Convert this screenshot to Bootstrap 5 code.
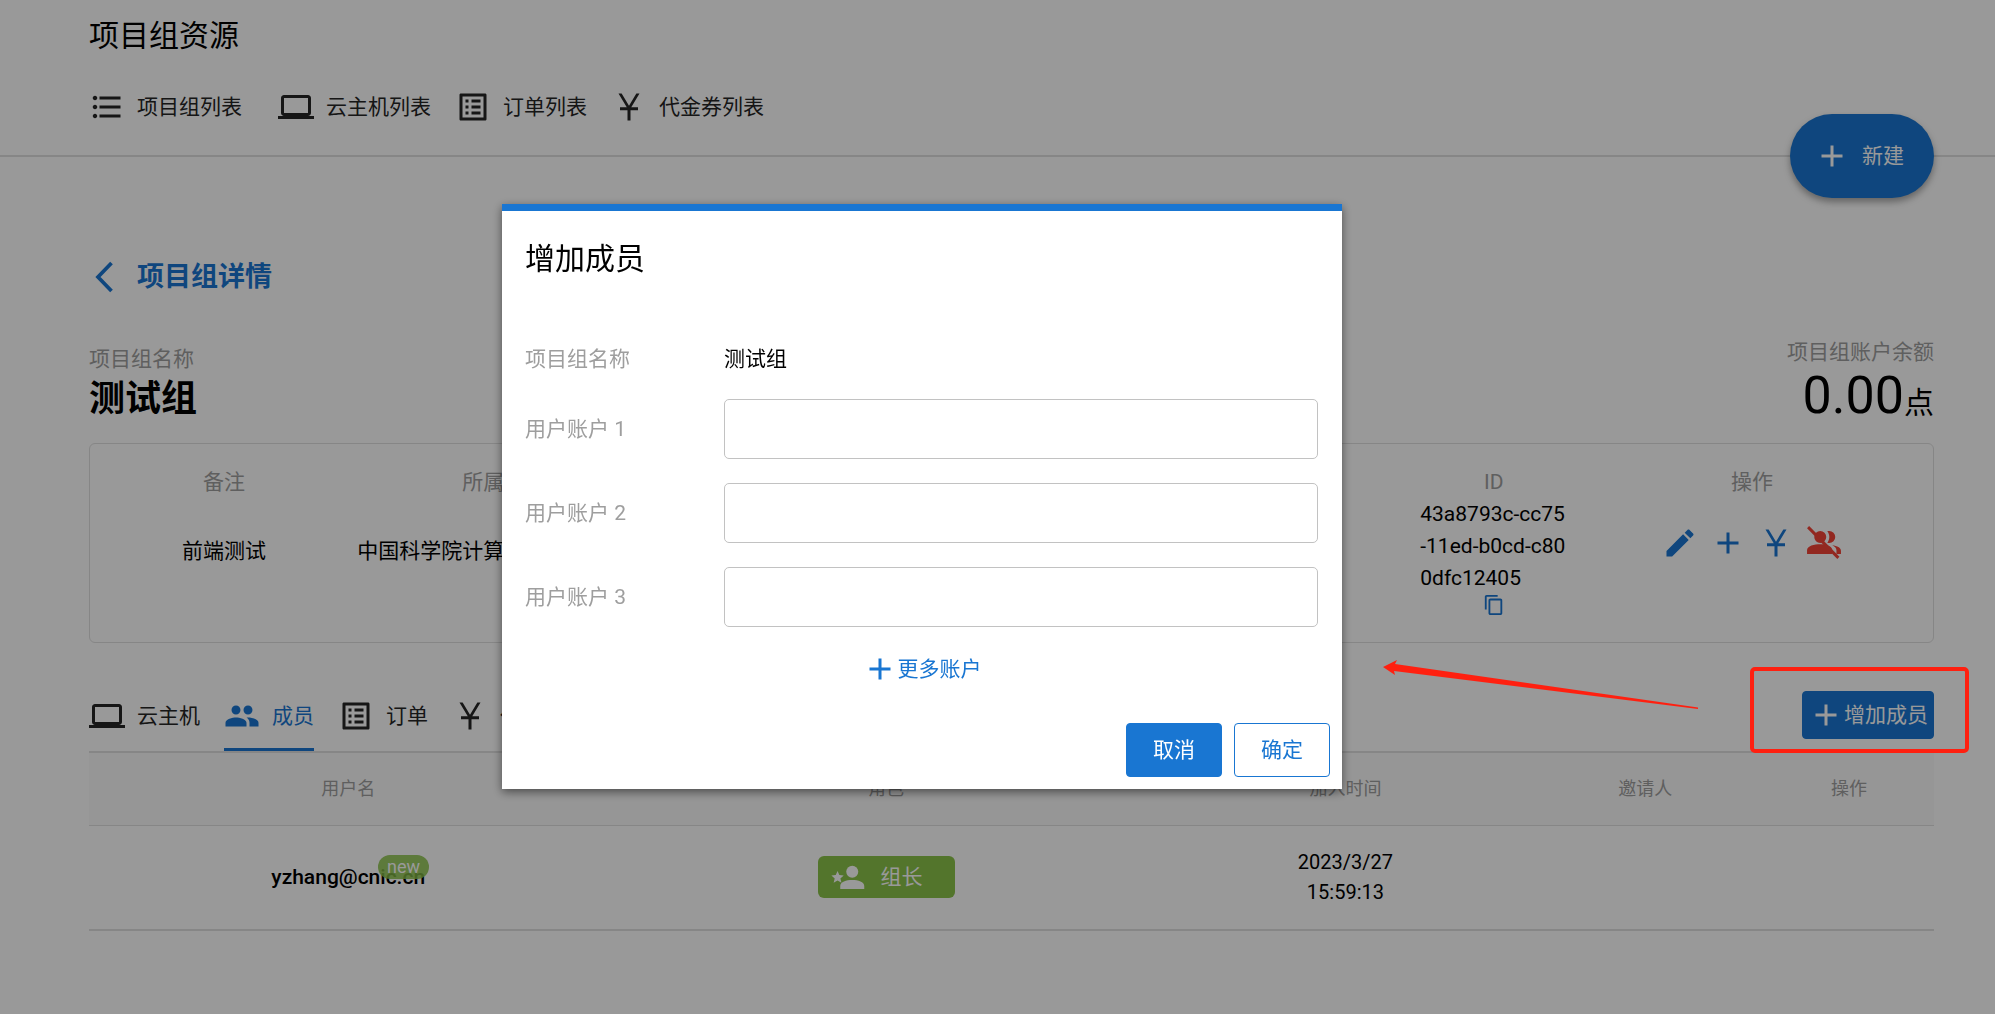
<!DOCTYPE html>
<html lang="zh-CN">
<head>
<meta charset="utf-8">
<meta name="viewport" content="width=device-width, initial-scale=1">
<title>项目组资源</title>
<link href="https://cdn.jsdelivr.net/npm/bootstrap@5.3.0/dist/css/bootstrap.min.css" rel="stylesheet">
<style>
  :root { --blue: #1976d2; --line: #e0e0e0; --hint: #9e9e9e; }
  body { font-family: Roboto, "Noto Sans CJK SC", sans-serif; font-size: 21px; line-height: 32px; color: #000; background: #fff; }
  a { text-decoration: none; }
  .ico { width: 36px; height: 36px; flex: none; fill: currentColor; display: block; }
  .gutters { padding-left: 89px; padding-right: 61px; }
  .hint { color: var(--hint); }
  .blue-text { color: var(--blue); }
  .btn { --bs-btn-font-size: 21px; --bs-btn-line-height: 32px; --bs-btn-border-radius: 4px; }
  .btn-blue { --bs-btn-color: #fff; --bs-btn-bg: var(--blue); --bs-btn-border-color: var(--blue); --bs-btn-hover-color: #fff; --bs-btn-hover-bg: #1565c0; }
  .btn-line { --bs-btn-color: var(--blue); --bs-btn-border-color: var(--blue); --bs-btn-bg: #fff; --bs-btn-hover-color: var(--blue); --bs-btn-hover-bg: #e3f2fd; }

  .top-bar { border-bottom: 2px solid var(--line); height: 157px; padding-top: 18px; }
  .page-title { font-size: 30px; line-height: 36px; font-weight: 400; margin: 0 0 35px; }
  .item-link { color: #262626; gap: 12px; }
  .fab { position: absolute; right: 61px; top: 114px; height: 84px; padding: 0 30px 0 24px; gap: 12px; --bs-btn-border-radius: 42px; box-shadow: 0 4px 7px rgba(0,0,0,.35); border: 0; }

  .detail-head { padding-top: 102px; }
  .back-link { font-size: 27px; line-height: 36px; font-weight: 700; gap: 12px; }
  .group-name { font-size: 36px; line-height: 48px; font-weight: 700; margin: 0 0 8px; }
  .balance { font-size: 52px; line-height: 56px; }
  .balance-unit { font-size: 30px; }

  .info-box { display: grid; grid-template-columns: 258fr 260fr 753fr 254fr 262fr; height: 200px; border: 1px solid var(--line); border-radius: 6px; padding: 22px 50px 0 5px; margin-top: 12px; text-align: center; }
  .info-value { height: 106px; display: flex; align-items: center; justify-content: center; flex-direction: column; }
  .id-text { width: 147px; text-align: left; word-break: break-all; line-height: 32px; }
  .icon-btn { border: 0; padding: 0; background: none; color: var(--blue); }
  .ico-small { width: 22px; height: 22px; }

  .tab-bar { border-bottom: 2px solid var(--line); height: 74px; margin-top: 36px; }
  .tab-bar .nav-link { padding: 4px 0 0; gap: 12px; color: #262626; border-bottom: 3px solid transparent; }
  .tab-bar .nav-link.active { color: var(--blue); border-bottom-color: var(--blue); }
  .btn-add { height: 48px; padding: 0 5px; }

  .member-table { table-layout: fixed; text-align: center; margin: 0; --bs-table-bg: transparent; --bs-table-color: #000; border-color: var(--line); }
  .member-table > thead th { height: 72px; font-size: 18px; font-weight: 400; background: #fafafa; color: var(--hint); vertical-align: middle; border-bottom: 1px solid var(--line); }
  .member-table > tbody td { height: 105px; vertical-align: middle; font-size: 20px; line-height: 30px; padding: 0; border-bottom: 2px solid var(--line); }
  .mail { font-size: 21px; font-weight: 500; }
  .new-pill { position: absolute; right: -4px; top: -10px; background: #8bc34a; color: #fff; opacity: .86; border-radius: 12px; font-size: 18px; font-weight: 400; line-height: 24px; padding: 0 9px; }
  .role-chip { background: #8bc34a; color: #fff; border-radius: 6px; font-size: 21px; width: 137px; height: 42px; padding-left: 11px; gap: 16px; }

  .modal-backdrop { --bs-backdrop-opacity: .4; }
  .member-modal { padding-right: 151px; }
  .member-modal .modal-dialog { max-width: 840px; margin-top: 204px; }
  .member-modal .modal-content { border: 0; border-top: 7px solid var(--blue); border-radius: 0; box-shadow: 0 3px 9px rgba(0,0,0,.5); color: #000; }
  .member-modal .modal-header { border: 0; padding: 29px 23px 0; }
  .member-modal .modal-title { font-size: 30px; line-height: 38px; font-weight: 400; }
  .member-modal .modal-body { padding: 65px 24px 0 23px; }
  .member-modal .modal-footer { border: 0; padding: 36px 12px 12px; gap: 12px; }
  .form-line { display: grid; grid-template-columns: 199px 1fr; align-items: center; margin-bottom: 24px; }
  .form-line label, .form-line .hint { line-height: 32px; }
  .form-line .form-control { height: 60px; border: 1px solid #c2c2c2; border-radius: 5px; font-size: 21px; }
  .btn-wide { width: 96px; height: 54px; margin: 0; }

  .note-layer { position: absolute; z-index: 1070; pointer-events: none; }
  .note-frame { right: 26px; top: 667px; width: 219px; height: 86px; border: 4px solid #ff2010; border-radius: 5px; }
  .note-arrow { right: 295px; top: 659px; width: 317px; height: 52px; fill: #ff2010; }
</style>
<script src="https://cdn.jsdelivr.net/npm/bootstrap@5.3.0/dist/js/bootstrap.bundle.min.js" defer></script>
</head>
<body class="position-relative min-vh-100">

<svg class="d-none" aria-hidden="true">
  <symbol id="i-list" viewBox="0 0 24 24"><path d="M4 10.5c-.83 0-1.5.67-1.5 1.5s.67 1.5 1.5 1.5 1.5-.67 1.5-1.5-.67-1.5-1.5-1.5zm0-6c-.83 0-1.5.67-1.5 1.5S3.17 7.5 4 7.5 5.5 6.83 5.5 6 4.83 4.5 4 4.5zm0 12c-.83 0-1.5.68-1.5 1.5s.68 1.5 1.5 1.5 1.5-.68 1.5-1.5-.67-1.5-1.5-1.5zM7 19h14v-2H7v2zm0-6h14v-2H7v2zm0-8v2h14V5H7z"/></symbol>
  <symbol id="i-laptop" viewBox="0 0 24 24"><path d="M20 18c1.1 0 1.99-.9 1.99-2L22 6c0-1.1-.9-2-2-2H4c-1.1 0-2 .9-2 2v10c0 1.1.9 2 2 2H0v2h24v-2h-4zM4 6h16v10H4V6z"/></symbol>
  <symbol id="i-order" viewBox="0 0 24 24"><path d="M19 5v14H5V5h14m1.1-2H3.9c-.5 0-.9.4-.9.9v16.2c0 .4.4.9.9.9h16.2c.4 0 .9-.5.9-.9V3.9c0-.5-.5-.9-.9-.9zM11 7h6v2h-6V7zm0 4h6v2h-6v-2zm0 4h6v2h-6zM7 7h2v2H7zm0 4h2v2H7zm0 4h2v2H7z"/></symbol>
  <symbol id="i-yen" viewBox="0 0 24 24"><path d="M5 3h2.1l4.9 8.1L16.900 3H19l-5.500 9.200H18v2h-5V21h-2v-6.800H6v-2h4.500z"/></symbol>
  <symbol id="i-group" viewBox="0 0 24 24"><path d="M16 11c1.660 0 2.990-1.340 2.990-3S17.660 5 16 5c-1.660 0-3 1.340-3 3s1.340 3 3 3zm-8 0c1.660 0 2.990-1.340 2.990-3S9.660 5 8 5C6.340 5 5 6.340 5 8s1.340 3 3 3zm0 2c-2.330 0-7 1.170-7 3.500V19h14v-2.500c0-2.330-4.670-3.500-7-3.500zm8 0c-.29 0-.62.02-.97.05 1.160.84 1.970 1.970 1.970 3.450V19h6v-2.500c0-2.330-4.670-3.500-7-3.500z"/></symbol>
  <symbol id="i-add" viewBox="0 0 24 24"><path d="M19 13h-6v6h-2v-6H5v-2h6V5h2v6h6v2z"/></symbol>
  <symbol id="i-back" viewBox="0 0 24 24"><path d="M15 2.700L6 12l9 9.300" fill="none" stroke="currentColor" stroke-width="2.500"/></symbol>
  <symbol id="i-edit" viewBox="0 0 24 24"><path d="M3 17.250V21h3.750L17.810 9.940l-3.750-3.750L3 17.250zM20.710 7.040c.39-.39.39-1.020 0-1.410l-2.340-2.340c-.39-.39-1.020-.39-1.410 0l-1.830 1.830 3.750 3.750 1.830-1.830z"/></symbol>
  <symbol id="i-copy" viewBox="0 0 24 24"><path d="M16 1H4c-1.100 0-2 .9-2 2v14h2V3h12V1zm3 4H8c-1.100 0-2 .9-2 2v14c0 1.100.9 2 2 2h11c1.100 0 2-.9 2-2V7c0-1.100-.9-2-2-2zm0 16H8V7h11v14z"/></symbol>
  <mask id="m-slash" maskUnits="userSpaceOnUse" x="0" y="0" width="24" height="24"><path fill="#fff" d="M0 0h24v24H0z"/><path d="M2.500 0.500L24 22" stroke="#000" stroke-width="2"/></mask>
  <symbol id="i-group-off" viewBox="0 0 24 24"><g mask="url(#m-slash)"><path d="M9.500 4a4 4 0 1 1 0 8a4 4 0 0 1 0-8zM15.500 4a4 4 0 1 1 0 8c-.5 0-.9-.1-1.300-.2 1.800-2.100 1.800-5.500 0-7.600.4-.1.800-.2 1.300-.2zM.7 19.300v-2.500C.7 14 5.500 12.900 9.500 12.900s8 1.200 8 3.900v2.500zM17.500 13.500c3.300.5 5.800 1.600 5.800 3.600v2.200h-3v-2.500c0-1.500-1.200-2.500-2.800-3.300z"/></g><path d="M.7 2.100L2.100.7 22.300 21.200 20.900 22.600z"/></symbol>
  <symbol id="i-leader" viewBox="0 0 24 24"><circle cx="15.500" cy="8.500" r="4"/><path d="M7.500 20v-2c0-2.700 4-4 8-4s8 1.300 8 4v2zM5.700 8l1.200 2.700 2.900.3-2.200 2 .7 2.900-2.600-1.600-2.600 1.600.7-2.900-2.200-2 2.900-.3z"/></symbol>
</svg>

<header class="top-bar gutters">
  <h1 class="page-title">项目组资源</h1>
  <nav class="d-flex align-items-center gap-4" aria-label="项目组资源">
    <a href="#" class="item-link d-flex align-items-center me-2 pe-1"><svg class="ico"><use href="#i-list"/></svg>项目组列表</a>
    <a href="#" class="item-link d-flex align-items-center"><svg class="ico"><use href="#i-laptop"/></svg>云主机列表</a>
    <a href="#" class="item-link d-flex align-items-center"><svg class="ico"><use href="#i-order"/></svg>订单列表</a>
    <a href="#" class="item-link d-flex align-items-center"><svg class="ico"><use href="#i-yen"/></svg>代金券列表</a>
  </nav>
  <button type="button" class="btn btn-blue fab d-flex align-items-center"><svg class="ico"><use href="#i-add"/></svg>新建</button>
</header>

<main class="gutters">
  <div class="detail-head d-flex justify-content-between">
    <div>
      <a href="#" class="back-link blue-text d-flex align-items-center"><svg class="ico"><use href="#i-back"/></svg>项目组详情</a>
      <div class="hint mt-5">项目组名称</div>
      <h2 class="group-name">测试组</h2>
    </div>
    <div class="text-end align-self-end">
      <div class="hint">项目组账户余额</div>
      <div class="balance">0.00<span class="balance-unit">点</span></div>
    </div>
  </div>

  <section class="info-box">
    <div><div class="hint">备注</div><div class="info-value">前端测试</div></div>
    <div><div class="hint">所属</div><div class="info-value text-nowrap">中国科学院计算技术研究所</div></div>
    <div></div>
    <div>
      <div class="hint">ID</div>
      <div class="info-value justify-content-start"><div class="id-text">43a8793c-cc75-11ed-b0cd-c800dfc12405</div>
        <button type="button" class="icon-btn" aria-label="复制"><svg class="ico ico-small"><use href="#i-copy"/></svg></button></div>
    </div>
    <div>
      <div class="hint">操作</div>
      <div class="info-value flex-row gap-2 pb-3">
        <button type="button" class="icon-btn me-1" aria-label="编辑"><svg class="ico"><use href="#i-edit"/></svg></button>
        <button type="button" class="icon-btn me-1" aria-label="增加"><svg class="ico"><use href="#i-add"/></svg></button>
        <button type="button" class="icon-btn me-1" aria-label="代金券"><svg class="ico"><use href="#i-yen"/></svg></button>
        <button type="button" class="icon-btn" style="color:#f44336" aria-label="解散"><svg class="ico"><use href="#i-group-off"/></svg></button>
      </div>
    </div>
  </section>

  <section>
    <div class="tab-bar d-flex justify-content-between">
      <nav class="nav gap-4" aria-label="详情">
        <a href="#" class="nav-link d-flex align-items-center"><svg class="ico"><use href="#i-laptop"/></svg>云主机</a>
        <a href="#" class="nav-link active d-flex align-items-center"><svg class="ico"><use href="#i-group"/></svg>成员</a>
        <a href="#" class="nav-link d-flex align-items-center"><svg class="ico"><use href="#i-order"/></svg>订单</a>
        <a href="#" class="nav-link d-flex align-items-center"><svg class="ico"><use href="#i-yen"/></svg>代金券</a>
      </nav>
      <button type="button" class="btn btn-blue btn-add d-flex align-items-center align-self-center"><svg class="ico"><use href="#i-add"/></svg>增加成员</button>
    </div>
    <table class="table member-table">
      <colgroup><col style="width:28.1%"><col style="width:30.2%"><col style="width:19.6%"><col style="width:12.9%"><col style="width:9.2%"></colgroup>
      <thead><tr><th scope="col">用户名</th><th scope="col">角色</th><th scope="col">加入时间</th><th scope="col">邀请人</th><th scope="col">操作</th></tr></thead>
      <tbody><tr>
        <td><span class="mail position-relative">yzhang@cnic.cn<span class="new-pill">new</span></span></td>
        <td><span class="role-chip d-inline-flex align-items-center align-middle"><svg class="ico"><use href="#i-leader"/></svg>组长</span></td>
        <td>2023/3/27<br>15:59:13</td><td></td><td></td>
      </tr></tbody>
    </table>
  </section>
</main>

<div class="modal-backdrop show"></div>
<div class="modal member-modal d-block" role="dialog" aria-labelledby="dlg-title">
  <div class="modal-dialog">
    <form class="modal-content">
      <div class="modal-header"><h2 class="modal-title" id="dlg-title">增加成员</h2></div>
      <div class="modal-body">
        <div class="form-line"><span class="hint">项目组名称</span><span>测试组</span></div>
        <div class="form-line"><label class="hint" for="acc1">用户账户 1</label><input class="form-control" id="acc1" type="text"></div>
        <div class="form-line"><label class="hint" for="acc2">用户账户 2</label><input class="form-control" id="acc2" type="text"></div>
        <div class="form-line"><label class="hint" for="acc3">用户账户 3</label><input class="form-control" id="acc3" type="text"></div>
        <button type="button" class="icon-btn d-flex align-items-center mx-auto"><svg class="ico"><use href="#i-add"/></svg>更多账户</button>
      </div>
      <div class="modal-footer">
        <button type="button" class="btn btn-blue btn-wide">取消</button>
        <button type="button" class="btn btn-line btn-wide">确定</button>
      </div>
    </form>
  </div>
</div>

<div class="note-layer note-frame"></div>
<svg class="note-layer note-arrow" viewBox="0 0 317 52" aria-hidden="true"><path d="M0 8L14 1 12 5 315 48.500 315 50 11 12 12 16z"/></svg>
</body>
</html>
